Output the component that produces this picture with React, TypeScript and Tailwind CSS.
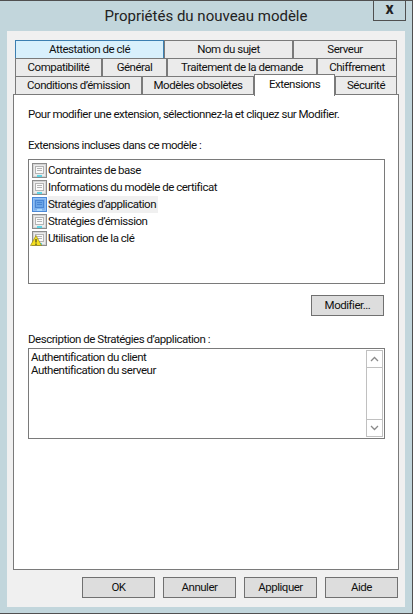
import { ReactNode } from "react";

function Tab({ w, active, children }: { w: string; active?: boolean; children: ReactNode }) {
  return (
    <div
      className={`${w} flex h-full items-center justify-center border border-b-0 text-[11.5px] tracking-[-0.48px] ${
        active ? "border-[#3c7fb1] bg-[#d8f0fc]" : "border-[#7a7a7a] bg-[#ebebeb]"
      }`}
    >
      {children}
    </div>
  );
}

function ExtIcon({ selected, warn }: { selected?: boolean; warn?: boolean }) {
  const page = selected ? "#7db0ec" : "#ececec";
  const line = selected ? "#4a86d4" : "#b4b4b4";
  return (
    <svg width="15" height="15" viewBox="0 0 15 15" className="mr-[1px] shrink-0 overflow-visible">
      <rect x="0.5" y="0.5" width="14" height="14" fill={page} stroke={selected ? "#4a88d8" : "#8c8c8c"} />
      <rect x="1.5" y="1.5" width="12" height="12" fill="none" stroke={selected ? "#94c0f2" : "#d4d4d4"} />
      <rect x="3.5" y="3.5" width="8" height="7" fill={selected ? "#6aa5e8" : "#fafafa"} stroke={line} />
      <path d="M5 5.5h5M5 7.5h5" stroke={line} strokeWidth="1" />
      <rect x="5" y="12" width="5" height="2" fill={selected ? "#a8d8ff" : "#5fd4e4"} />
      {warn && (
        <>
          <path d="M4 4.5 L9.5 14.5 L-1.5 14.5 Z" fill="#f5e020" stroke="#8a7a10" strokeWidth="0.6" />
          <path d="M4 8v3.5M4 12.5v1.5" stroke="#222" strokeWidth="1" />
        </>
      )}
    </svg>
  );
}

function DlgButton({ children }: { children: ReactNode }) {
  return (
    <div className="flex h-[21px] w-[73px] items-center justify-center border border-[#707070] bg-[#dddddd] text-[11.5px] tracking-[-0.48px]">
      {children}
    </div>
  );
}

export default function App() {
  const items = [
    { label: "Contraintes de base" },
    { label: "Informations du modèle de certificat" },
    { label: "Stratégies d’application", selected: true },
    { label: "Stratégies d’émission" },
    { label: "Utilisation de la clé", warn: true },
  ];

  return (
    <div
      className="h-[614px] w-[414px] overflow-hidden bg-white text-[#111]"
      style={{ fontFamily: 'Roboto, "Noto Sans", sans-serif' }}
    >
      <div className="flex h-[614px] w-[413px] flex-col border-t border-r border-b border-[#505050] bg-[#c2d6dc] px-[7px] pb-[6px]">
        <div className="relative flex h-[30px] shrink-0 items-center justify-center text-[15px] text-[#222]">
          Propriétés du nouveau modèle
          <div className="absolute -top-px right-[-1px] flex h-[21px] w-[33px] items-center justify-center border border-t-0 border-[#505050] pb-[2px] text-[16px] font-bold">
            x
          </div>
        </div>

        <div className="flex min-h-0 flex-1 flex-col bg-[#f0f0f0] px-[6px] pt-[9px]">
          <div className="px-[2px]">
            <div className="flex h-[18px]">
              <Tab w="w-[149px]" active>Attestation de clé</Tab>
              <Tab w="w-[129px]">Nom du sujet</Tab>
              <Tab w="w-[104px]">Serveur</Tab>
            </div>
            <div className="flex h-[18px]">
              <Tab w="w-[87px]">Compatibilité</Tab>
              <Tab w="w-[65px]">Général</Tab>
              <Tab w="w-[150px]">Traitement de la demande</Tab>
              <Tab w="w-[80px]">Chiffrement</Tab>
            </div>
            <div className="flex h-[18px]">
              <Tab w="w-[127px]">Conditions d’émission</Tab>
              <Tab w="w-[112px]">Modèles obsolètes</Tab>
              <div className="relative z-10 -mt-[2px] flex h-[22px] w-[81px] items-start justify-center border border-b-0 border-[#7a7a7a] bg-white pt-[1px] text-[11.5px] tracking-[-0.48px]">
                Extensions
              </div>
              <Tab w="w-[62px]">Sécurité</Tab>
            </div>
          </div>

          <div className="flex h-[476px] w-[386px] flex-col border border-[#7a7a7a] bg-white px-[14px] text-[11.5px] tracking-[-0.48px]">
            <div className="mt-[11px] h-[17px] leading-[17px]">
              Pour modifier une extension, sélectionnez-la et cliquez sur Modifier.
            </div>
            <div className="mt-[14px] h-[17px] leading-[17px]">Extensions incluses dans ce modèle :</div>
            <div className="mt-[5px] h-[125px] w-[357px] border border-[#7a7a7a] pl-[3px] pt-[2px]">
              {items.map((it) => (
                <div key={it.label} className="flex h-[17px] items-center">
                  <ExtIcon selected={it.selected} warn={it.warn} />
                  <span className={`h-[17px] leading-[17px] ${it.selected ? "bg-[#f0f0f0] pr-[2px]" : ""}`}>{it.label}</span>
                </div>
              ))}
            </div>
            <div className="mt-[11px] flex w-[356px] justify-end">
              <DlgButton>Modifier...</DlgButton>
            </div>
            <div className="mt-[15px] h-[17px] leading-[17px]">Description de Stratégies d’application :</div>
            <div className="flex h-[91px] w-[357px] border border-[#7a7a7a] pl-[2px]">
              <div className="flex-1 pt-[2px] leading-[13px]">
                <div>Authentification du client</div>
                <div>Authentification du serveur</div>
              </div>
              <div className="mx-[1px] my-[1px] flex w-[17px] flex-col justify-between border border-[#c0c0c0]">
                <div className="flex h-[17px] items-center justify-center border-b border-[#c0c0c0]">
                  <svg width="9" height="6" viewBox="0 0 9 6">
                    <path d="M1 5 L4.5 1.5 L8 5" fill="none" stroke="#8a8a8a" strokeWidth="1.3" />
                  </svg>
                </div>
                <div className="flex h-[17px] items-center justify-center border-t border-[#c0c0c0]">
                  <svg width="9" height="6" viewBox="0 0 9 6">
                    <path d="M1 1 L4.5 4.5 L8 1" fill="none" stroke="#8a8a8a" strokeWidth="1.3" />
                  </svg>
                </div>
              </div>
            </div>
          </div>

          <div className="mt-[7px] flex justify-end gap-[8px] pr-[1px]">
            <DlgButton>OK</DlgButton>
            <DlgButton>Annuler</DlgButton>
            <DlgButton>Appliquer</DlgButton>
            <DlgButton>Aide</DlgButton>
          </div>
        </div>
      </div>
    </div>
  );
}
